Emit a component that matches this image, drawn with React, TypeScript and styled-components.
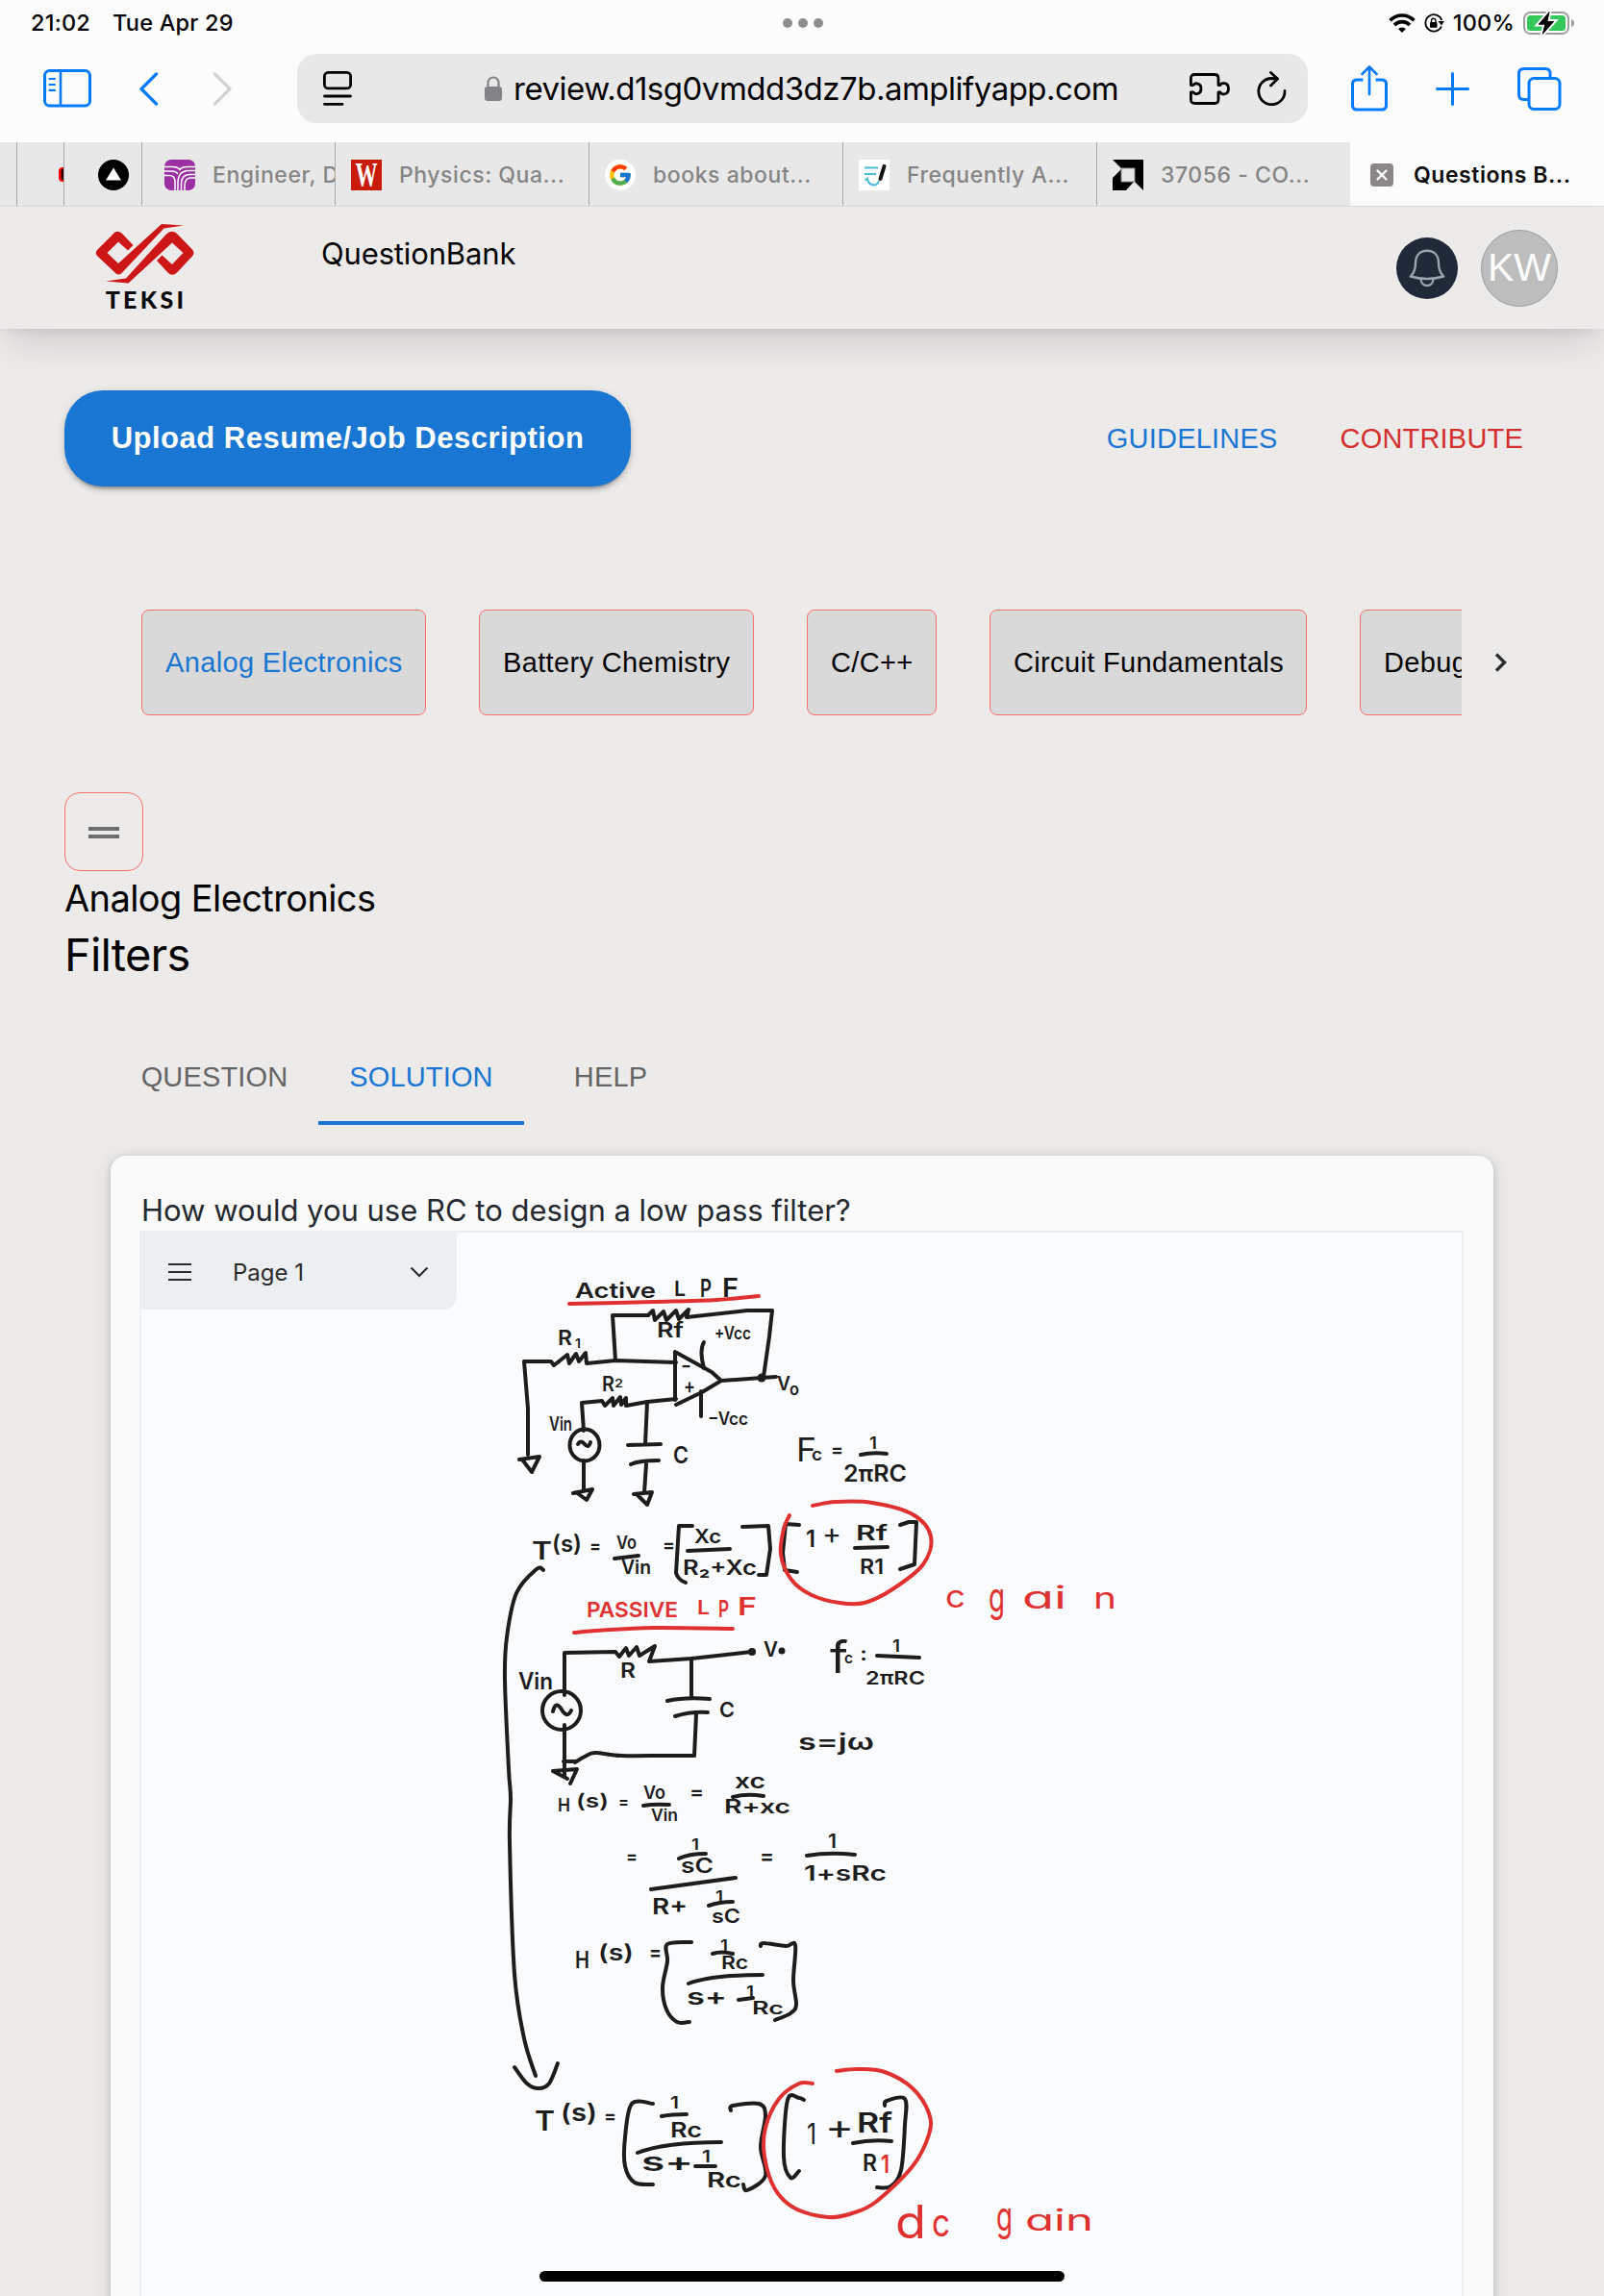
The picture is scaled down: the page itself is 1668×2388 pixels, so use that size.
import React, { useState } from "react";
import styled, { createGlobalStyle } from 'styled-components'
import { FcGoogle } from 'react-icons/fc'

const SANS = `Inter, "Liberation Sans", sans-serif`;
const HELV = `"Liberation Sans", Arial, sans-serif`;
const INK = '#1d1d1d';
const RED = '#e03131';

const topics = [
    { name: 'Analog Electronics', width: 296 },
    { name: 'Battery Chemistry', width: 286 },
    { name: 'C/C++', width: 135 },
    { name: 'Circuit Fundamentals', width: 330 },
    { name: 'Debug', width: 220 },
];

const sections = [
    { name: 'Question', width: 216 },
    { name: 'Solution', width: 214 },
    { name: 'Help', width: 180 },
];


export default function App(){

    const [topic, setTopic] = useState('Analog Electronics');
    const [section, setSection] = useState('Solution');

    return(
        <Page>
            <GlobalStyle />
            <StatusBar>
                <StatusText $gap={23}><span>21:02</span><span>Tue Apr 29</span></StatusText>
                <Dots><i /><i /><i /></Dots>
                <StatusIcons>
                    <WifiIcon />
                    <RotationLockIcon />
                    <StatusText $gap={0}>100%</StatusText>
                    <BatteryIcon />
                </StatusIcons>
            </StatusBar>

            <Toolbar>
                <ToolGroup>
                    <SidebarIcon />
                    <ChevronIcon color="#007aff" d="M17.500 2 L2 17.500 L17.500 33" />
                    <ChevronIcon color="#d3d3d4" d="M2.500 2 L18 17.500 L2.500 33" />
                </ToolGroup>
                <AddressBar>
                    <ReaderIcon />
                    <Address>
                        <LockIcon />
                        <span>review.d1sg0vmdd3dz7b.amplifyapp.com</span>
                    </Address>
                    <AddressTools>
                        <PuzzleIcon />
                        <ReloadIcon />
                    </AddressTools>
                </AddressBar>
                <ToolActions>
                    <ShareIcon />
                    <PlusIcon />
                    <TabsIcon />
                </ToolActions>
            </Toolbar>

            <TabStrip>
                <BrowserTab $width={17} $pad={0} $first />
                <BrowserTab $width={49} $pad={43}><VideoFavicon /></BrowserTab>
                <BrowserTab $width={81} $pad={35}><TriangleFavicon /></BrowserTab>
                <BrowserTab $width={201} $pad={23}><TreeFavicon /><TabTitle>Engineer, D</TabTitle></BrowserTab>
                <BrowserTab $width={264} $pad={16}><WFavicon><span>W</span></WFavicon><TabTitle>Physics: Qua...</TabTitle></BrowserTab>
                <BrowserTab $width={264} $pad={16}><RoundFavicon><FcGoogle size={26} /></RoundFavicon><TabTitle>books about...</TabTitle></BrowserTab>
                <BrowserTab $width={264} $pad={16}><NotesFavicon /><TabTitle>Frequently A...</TabTitle></BrowserTab>
                <BrowserTab $width={264} $pad={16}><ArrowFavicon /><TabTitle>37056 - CO...</TabTitle></BrowserTab>
                <BrowserTab $width={264} $pad={21} $active>
                    <CloseIcon />
                    <TabTitle $active>Questions B...</TabTitle>
                </BrowserTab>
            </TabStrip>

            <Header>
                <Brand>
                    <TeksiLogo />
                    <BrandName>TEKSI</BrandName>
                </Brand>
                <SiteTitle>QuestionBank</SiteTitle>
                <HeaderActions>
                    <BellButton><BellIcon /></BellButton>
                    <Avatar>KW</Avatar>
                </HeaderActions>
            </Header>

            <Content>
                <ActionsRow>
                    <UploadButton>Upload Resume/Job Description</UploadButton>
                    <TextLinks>
                        <TextLink $color="#1976d2">Guidelines</TextLink>
                        <TextLink $color="#d32f2f">Contribute</TextLink>
                    </TextLinks>
                </ActionsRow>

                <TopicsRow>
                    <TopicsScroller>
                        {topics.map((t) => (
                            <TopicChip
                                key={t.name}
                                $width={t.width}
                                $selected={t.name === topic}
                                onClick={() => setTopic(t.name)}
                            >
                                {t.name}
                            </TopicChip>
                        ))}
                    </TopicsScroller>
                    <svg width="14" height="20" viewBox="0 0 14 20">
                        <path d="M2 1.500 L10.500 10 L2 18.500" fill="none" stroke="#2e2e2e" strokeWidth="3.400" />
                    </svg>
                </TopicsRow>

                <MenuButton><i /><i /></MenuButton>
                <TopicTitle>{topic}</TopicTitle>
                <SubTitle>Filters</SubTitle>

                <SectionTabs>
                    {sections.map((s) => (
                        <SectionTab
                            key={s.name}
                            $width={s.width}
                            $selected={s.name === section}
                            onClick={() => setSection(s.name)}
                        >
                            {s.name}
                        </SectionTab>
                    ))}
                </SectionTabs>

                <Card>
                    <Prompt>How would you use RC to design a low pass filter?</Prompt>
                    <Board>
                        <Whiteboard />
                        <PageMenu>
                            <svg width="24" height="20" viewBox="0 0 24 20">
                                <path d="M0 2H24 M0 10H24 M0 18H24" stroke="#2b2b2b" strokeWidth="2.200" />
                            </svg>
                            <span>Page 1</span>
                            <svg width="20" height="12" viewBox="0 0 20 12">
                                <path d="M1.500 1.500 L10 10 L18.500 1.500" fill="none" stroke="#2b2b2b" strokeWidth="2.200" />
                            </svg>
                        </PageMenu>
                    </Board>
                </Card>
            </Content>
            <HomeIndicator />
        </Page>
    );
}


/* ---------- whiteboard ---------- */

type Pt = [number, number];

// soft curve through every point
function curve(pts: Pt[]) {
    let d = `M${pts[0][0]} ${pts[0][1]}`;
    for (let i = 0; i < pts.length - 1; i++) {
        const a = pts[i - 1] || pts[i];
        const b = pts[i];
        const c = pts[i + 1];
        const e = pts[i + 2] || c;
        d += ` C${b[0] + (c[0] - a[0]) / 6} ${b[1] + (c[1] - a[1]) / 6} ${c[0] - (e[0] - b[0]) / 6} ${c[1] - (e[1] - b[1]) / 6} ${c[0]} ${c[1]}`;
    }
    return d;
}

// [text, x, baseline, width, font size]
type Label = [string, number, number, number, number];

const labels: Label[] = [
    ['Active', 598, 1350, 84, 22], ['L', 701, 1348, 12, 22], ['P', 728, 1349, 12, 25], ['F', 751, 1349, 17, 27],
    ['Rf', 683, 1391, 28, 22], ['+Vcc', 743, 1393, 38, 18],
    ['R', 580, 1399, 15, 22], ['1', 598, 1402, 6, 13],
    ['R', 626, 1447, 13, 21], ['2', 639, 1443, 9, 12],
    ['−', 708, 1427, 11, 20], ['+', 711, 1449, 12, 22],
    ['−Vcc', 736, 1482, 42, 18], ['V', 808, 1446, 14, 20], ['o', 821, 1451, 10, 17],
    ['Vin', 571, 1488, 24, 20], ['C', 700, 1522, 16, 24],
    ['F', 828, 1520, 21, 34], ['c', 844, 1519, 11, 18], ['=', 864, 1515, 13, 20], ['1', 904, 1507, 8, 17], ['2πRC', 877, 1541, 66, 24],
    ['T', 553, 1622, 21, 26], ['(s)', 574, 1614, 31, 24], ['=', 613, 1615, 12, 20],
    ['Vo', 641, 1611, 21, 19], ['Vin', 646, 1637, 31, 20], ['=', 689, 1614, 13, 20],
    ['Xc', 722, 1605, 28, 20], ['R₂+Xc', 710, 1638, 77, 21],
    ['1', 838, 1609, 10, 24], ['+', 855, 1606, 20, 30], ['Rf', 890, 1602, 33, 22], ['R1', 894, 1637, 25, 22],
    ['R', 645, 1745, 16, 22], ['V', 794, 1723, 15, 22], ['Vin', 539, 1757, 36, 24], ['C', 748, 1786, 16, 22],
    ['f', 863, 1740, 19, 46], ['c', 878, 1730, 9, 16], [':', 894, 1727, 8, 20], ['1', 928, 1718, 8, 17], ['2πRC', 900, 1752, 62, 19],
    ['s=jω', 830, 1820, 79, 24],
    ['H', 580, 1884, 13, 19], ['(s)', 599, 1880, 34, 20], ['=', 643, 1880, 11, 18],
    ['Vo', 669, 1871, 23, 19], ['Vin', 677, 1894, 28, 17], ['=', 717, 1871, 15, 20],
    ['xc', 764, 1860, 32, 22], ['R+xc', 753, 1886, 69, 20],
    ['=', 651, 1938, 12, 20], ['1', 719, 1924, 8, 16], ['sC', 708, 1948, 34, 21], ['R+', 678, 1991, 37, 23],
    ['1', 744, 1978, 8, 16], ['sC', 740, 2000, 30, 20],
    ['=', 790, 1938, 15, 22], ['1', 861, 1922, 9, 20], ['1+sRc', 836, 1956, 86, 22],
    ['H', 598, 2047, 15, 24], ['(s)', 622, 2039, 37, 23], ['=', 675, 2038, 13, 22],
    ['1', 749, 2029, 8, 16], ['Rc', 750, 2048, 28, 19], ['s+', 714, 2085, 42, 24], ['1', 776, 2077, 8, 16], ['Rc', 782, 2095, 33, 18],
    ['T', 556, 2216, 21, 28], ['(s)', 583, 2206, 38, 25], ['=', 628, 2208, 13, 20],
    ['1', 697, 2193, 9, 17], ['Rc', 697, 2223, 33, 22], ['s+', 667, 2258, 54, 27], ['1', 730, 2249, 9, 17], ['Rc', 735, 2275, 36, 22],
    ['1', 839, 2230, 10, 30], ['+', 858, 2225, 30, 36], ['Rf', 891, 2218, 37, 28], ['R', 897, 2258, 15, 24],
];

const redLabels: Label[] = [
    ['c', 983, 1672, 21, 32], ['g', 1028, 1676, 17, 42], ['ai', 1063, 1673, 46, 32], ['n', 1137, 1673, 24, 30],
    ['PASSIVE', 610, 1682, 95, 22], ['L', 725, 1679, 13, 20], ['P', 747, 1682, 11, 24], ['F', 767, 1680, 20, 26],
    ['1', 916, 2260, 9, 25],
    ['d', 931, 2328, 32, 48], ['c', 969, 2326, 19, 40], ['g', 1036, 2320, 17, 42], ['ain', 1066, 2320, 71, 30],
];

// straight and zig-zag pen strokes
const strokes = [
    'M549 1513V1465L545 1416H573L576 1420L590 1409L592 1418L599 1408L602 1416L609 1407L610 1418L640 1415L703 1417',
    'M640 1415L637 1368H674L679 1363L681 1373L690 1364L693 1373L703 1363L706 1372L716 1362L714 1370L777 1363H803L800 1390L794 1432',
    'M702 1406V1456 M702 1406L740 1427L750 1436L730 1448L703 1461 M750 1436L792 1433L807 1432',
    'M732 1396Q727 1404 732 1423 M729 1447V1473',
    'M607 1488L605 1459L626 1457L629 1462L637 1454L638 1462L645 1453L646 1461L651 1454V1462L673 1458L703 1455',
    'M673 1458L671 1502 M653 1503L687 1502 M656 1523Q664 1519 685 1519 M672 1523L670 1552',
    'M659 1554L678 1552L673 1565L662 1554 M607 1519V1549 M596 1553L616 1549L610 1560L599 1552 M540 1518L561 1515L553 1531L543 1518',
    'M601 1502Q604 1497 608 1502T614 1500',
    'M895 1513Q908 1510 922 1512',
    'M639 1621L664 1618 M715 1613L759 1611 M889 1610L923 1609',
    'M720 1587H706L703 1636Q705 1643 713 1646 M772 1588L799 1587L801 1611L797 1638H789',
    'M831 1586L817 1585L814 1615L816 1633L829 1635 M936 1586L945 1583H953L951 1627L936 1632',
    'M587 1763V1719L640 1718L644 1723L651 1714L654 1722L662 1713L665 1722L681 1712L675 1728L719 1725L781 1718',
    'M719 1725V1765 M694 1769Q712 1765 738 1767 M702 1785Q718 1780 736 1781 M724 1783L722 1826',
    'M587 1794V1848 M586 1832H598 M575 1842L600 1840L593 1855 M575 1842L590 1850',
    'M575 1780Q578 1768 584 1778T594 1779',
    'M912 1722L956 1724',
    'M669 1878Q680 1876 696 1877 M762 1869Q776 1865 794 1868',
    'M706 1933Q716 1928 734 1928 M677 1965L765 1953 M737 1982Q748 1978 762 1978 M839 1930Q862 1926 889 1929',
    'M741 2032Q750 2029 762 2032 M716 2063Q740 2054 793 2054 M768 2080L783 2078',
    'M688 2201Q698 2199 714 2199 M663 2239Q692 2228 750 2228 M723 2253H744 M887 2229Q906 2225 927 2227',
];

const curves: Pt[][] = [
    [[565, 1633], [558, 1632], [537, 1657], [527, 1703], [525, 1747], [529, 1840], [531, 1870], [530, 1917], [535, 2053], [545, 2120], [557, 2159]],
    [[535, 2150], [548, 2167], [560, 2172], [571, 2167], [580, 2146]],
    [[722, 1826], [690, 1826], [646, 1826], [619, 1823], [608, 1827], [598, 1833]],
    [[719, 2020], [694, 2022], [694, 2040], [689, 2067], [693, 2090], [704, 2103], [717, 2103]],
    [[791, 2024], [794, 2021], [817, 2024], [827, 2023], [825, 2060], [828, 2085], [822, 2094], [806, 2101]],
    [[679, 2188], [657, 2188], [650, 2223], [650, 2253], [660, 2270], [679, 2272]],
    [[760, 2195], [762, 2190], [789, 2188], [796, 2200], [791, 2233], [796, 2263], [777, 2278], [773, 2272]],
    [[836, 2184], [831, 2182], [819, 2184], [815, 2243], [822, 2265], [831, 2258]],
    [[920, 2190], [922, 2185], [941, 2183], [941, 2210], [937, 2257], [926, 2274], [912, 2275]],
];

const redCurves: Pt[][] = [
    [[592, 1356], [680, 1354], [745, 1352], [789, 1348]],
    [[597, 1698], [620, 1696], [680, 1693], [762, 1694]],
    [[845, 1566], [869, 1562], [907, 1563], [949, 1575], [968, 1598], [960, 1627], [928, 1653], [899, 1667], [873, 1667], [844, 1659], [823, 1643], [812, 1617], [815, 1590], [821, 1576]],
    [[870, 2154], [892, 2152], [920, 2155], [949, 2172], [966, 2198], [966, 2220], [949, 2253], [911, 2290], [886, 2302], [861, 2306], [827, 2297], [806, 2277], [795, 2243], [796, 2213], [810, 2183], [831, 2167], [845, 2167]],
];

function Whiteboard(){
    return(
        <Drawing viewBox="147 1282 1373 1106">
            <g stroke={INK}>
                {strokes.map((d) => <path key={d} d={d} />)}
                {curves.map((c, i) => <path key={i} d={curve(c)} />)}
                <ellipse cx="608" cy="1503" rx="15.500" ry="16.500" />
                <ellipse cx="584" cy="1779" rx="20" ry="20" />
            </g>
            <g fill={INK} stroke="none">
                <circle cx="792" cy="1433" r="4.500" />
                <circle cx="782" cy="1718" r="4" />
                <circle cx="813" cy="1717" r="3.500" />
            </g>
            <g stroke={RED}>
                {redCurves.map((c, i) => <path key={i} d={curve(c)} />)}
            </g>
            {labels.map(([text, x, y, w, s], i) => (
                <InkText key={i} x={x} y={y} textLength={w} fontSize={s} fill={INK}>{text}</InkText>
            ))}
            {redLabels.map(([text, x, y, w, s], i) => (
                <InkText key={i} x={x} y={y} textLength={w} fontSize={s} fill={RED}>{text}</InkText>
            ))}
        </Drawing>
    );
}

const InkText = styled.text.attrs({ lengthAdjust: 'spacingAndGlyphs' })`
    font-family: Inter, "DejaVu Sans", sans-serif;
    font-weight: ${({ fontSize }) => (Number(fontSize) > 29 ? 400 : 600)};
    font-feature-settings: "cv11";
    stroke: none;
`;

const Drawing = styled.svg`
    display: block;
    width: 1373px;
    height: 1106px;
    fill: none;
    stroke-width: 4;
    stroke-linecap: round;
    stroke-linejoin: round;
`;


/* ---------- icons ---------- */

const WifiIcon = () => (
    <svg width="28" height="20" viewBox="0 0 28 20">
        <g fill="none" stroke="#000" strokeWidth="3.600">
            <path d="M1.500 7.300A17.500 17.500 0 0 1 26.500 7.300" />
            <path d="M6 12A11.200 11.200 0 0 1 22 12" />
        </g>
        <path d="M14 20L10 16A5.800 5.800 0 0 1 18 16Z" />
    </svg>
);

const RotationLockIcon = () => (
    <svg width="21" height="20" viewBox="0 0 21 20">
        <path d="M18 13.500A8.700 8.700 0 1 1 18.300 7" fill="none" stroke="#000" strokeWidth="1.800" />
        <path d="M14.500 8L21 8L18 12.500Z" />
        <rect x="6" y="9" width="7.500" height="5.800" rx="1" />
        <path d="M7.500 9V7.500A2.200 2.200 0 0 1 12 7.500V9" fill="none" stroke="#000" strokeWidth="1.300" />
    </svg>
);

const BatteryIcon = () => (
    <svg width="54" height="26" viewBox="0 0 54 26">
        <rect x="1" y="2" width="46" height="22" rx="6.500" fill="none" stroke="#9d9d9d" strokeWidth="2" />
        <path d="M50 9Q53 10 53 13T50 17Z" fill="#9d9d9d" />
        <rect x="4" y="5" width="40" height="16" rx="3.500" fill="#34c759" />
        <path d="M27.500 .500L15.500 14.500H22.500L19.500 25.500L32.500 11H25.500Z" fill="#000" stroke="#fdfcfd" strokeWidth="4" paintOrder="stroke" />
        <path d="M27.500 1.500L16 14.500H22.500L20 24.500L32 11H25Z" fill="#000" />
    </svg>
);

const SidebarIcon = () => (
    <svg width="50" height="40" viewBox="0 0 50 40" fill="none" stroke="#007aff">
        <rect x="1.500" y="1.500" width="47" height="36.500" rx="5" strokeWidth="3" />
        <path d="M18 2V38" strokeWidth="2.600" />
        <path d="M6.500 10H12 M6.500 16H12 M6.500 21.800H12" strokeWidth="2.200" strokeLinecap="round" />
    </svg>
);

const ChevronIcon = ({ color, d }: { color: string, d: string }) => (
    <svg width="20" height="35" viewBox="0 0 20 35">
        <path d={d} fill="none" stroke={color} strokeWidth="3.200" strokeLinecap="round" strokeLinejoin="round" />
    </svg>
);

const ReaderIcon = () => (
    <svg width="30" height="36" viewBox="0 0 30 36" fill="none" stroke="#000" strokeWidth="2.800" strokeLinecap="round">
        <rect x="1.400" y="1.400" width="27.200" height="16.500" rx="4" />
        <path d="M1.500 26H28.500 M1.500 34.400H20" />
    </svg>
);

const LockIcon = () => (
    <svg width="18" height="26" viewBox="0 0 18 26">
        <rect x="0" y="11" width="18" height="15" rx="3" fill="#838287" />
        <path d="M3.500 11V6.500A5.500 5 0 0 1 14.500 6.500V11" fill="none" stroke="#838287" strokeWidth="2.200" />
    </svg>
);

const PuzzleIcon = () => (
    <svg width="42" height="33" viewBox="0 0 42 33">
        <path
            d="M1.400 12.500V5.500Q1.400 1.500 5.500 1.500H26Q30 1.500 30 5.500V12.500H32C33 9.500 40.500 9.500 40.500 16.200S33 23 32 20H30V27.500Q30 31.500 26 31.500H5.500Q1.400 31.500 1.400 27.500V20H4C6 23 12 22 12 16.200S6 9.500 4 12.500Z"
            fill="none" stroke="#000" strokeWidth="2.800" strokeLinejoin="round"
        />
    </svg>
);

const ReloadIcon = () => (
    <svg width="31" height="36" viewBox="0 0 31 36" fill="none" stroke="#000" strokeWidth="2.800" strokeLinecap="round" strokeLinejoin="round">
        <path d="M29 20.500A13.600 13.600 0 1 1 15.400 7.500L21.500 8" />
        <path d="M14.500 1.500L21.500 8L14.500 15" />
    </svg>
);

const ShareIcon = () => (
    <svg width="38" height="48" viewBox="0 0 38 48" fill="none" stroke="#007aff" strokeWidth="3" strokeLinecap="round" strokeLinejoin="round">
        <path d="M12.500 15H6Q1.500 15 1.500 19.500V41.500Q1.500 46 6 46H32Q36.500 46 36.500 41.500V19.500Q36.500 15 32 15H25.500" strokeLinecap="butt" />
        <path d="M19 30V2 M11.500 9L19 1.500L26.500 9" strokeWidth="2.600" />
    </svg>
);

const PlusIcon = () => (
    <svg width="35" height="35" viewBox="0 0 35 35">
        <path d="M17.500 1.500V33.500 M1.500 17.500H33.500" stroke="#007aff" strokeWidth="3" strokeLinecap="round" />
    </svg>
);

const TabsIcon = () => (
    <svg width="46" height="45" viewBox="0 0 46 45" fill="none" stroke="#007aff" strokeWidth="3">
        <path d="M11 33.500H6.500Q1.500 33.500 1.500 28.500V6.500Q1.500 1.500 6.500 1.500H29Q34 1.500 34 6.500V10" />
        <rect x="12" y="11.500" width="32" height="32" rx="5" />
    </svg>
);

const VideoFavicon = () => (
    <svg width="22" height="16" viewBox="0 0 22 16">
        <rect width="22" height="15" rx="4" fill="#f00" />
        <rect x="2.500" y="1.500" width="22" height="12" rx="3" fill="#2b0505" />
    </svg>
);

const TriangleFavicon = () => (
    <svg width="32" height="32" viewBox="0 0 32 32">
        <circle cx="16" cy="16" r="16" />
        <path d="M16 8.500L24 21.500H8Z" fill="#fff" />
    </svg>
);

const TreeFavicon = () => (
    <svg width="32" height="32" viewBox="0 0 32 32">
        <rect width="32" height="32" rx="7" fill="#9b30a5" />
        <g fill="none" stroke="#fff" strokeWidth="1.500">
            <path d="M0 7.500H8Q14 7.500 16 10.500Q18 7.500 24 7.500H32" />
            <path d="M0 12H7Q12 12 14 15 M32 11.500H25Q14 12 14 24V32" />
            <path d="M0 16.500H5Q11 16.500 11 23V32 M32 15.500H26Q17.500 16 17.500 25V32" />
            <path d="M32 19H27Q21 19.500 21 27V32" />
        </g>
    </svg>
);

const NotesFavicon = () => (
    <svg width="32" height="32" viewBox="0 0 32 32">
        <rect width="32" height="32" fill="#fff" />
        <path d="M6 8.500H20 M6 15H18 M6.500 21.500L9 19.500L10 23.500 M9 20C10 27 19 29 21 22" fill="none" stroke="#4bbcd6" strokeWidth="2" />
        <path d="M26.500 7L22.500 20" stroke="#111" strokeWidth="4" strokeLinecap="round" />
    </svg>
);

const ArrowFavicon = () => (
    <svg width="32" height="32" viewBox="0 0 32 32">
        <path d="M0 0H32V32L23 23V9H9Z" />
        <path d="M0 19L9 10V23H22L14 32H0Z" />
        <path d="M9 9H23V23H9Z" fill="#e8e8e8" stroke="#8c8c8c" />
    </svg>
);

const CloseIcon = () => (
    <svg width="24" height="24" viewBox="0 0 24 24">
        <rect width="24" height="24" rx="4" fill="#8b8788" />
        <path d="M7.500 7.500L16.500 16.500M16.500 7.500L7.500 16.500" stroke="#fff" strokeWidth="2.400" strokeLinecap="round" />
    </svg>
);

const TeksiLogo = () => (
    <svg width="104" height="64" viewBox="0 0 104 64">
        <path d="M24 9Q27 9 29 12L39.500 23L34 28.500L24 19.500L12.500 31L24 42L69 1L92 2.500L71.500 5.500L28.500 51Q24.500 56 20 51L2 34Q-.500 31 2 28L18 12Q21 8 24 9Z" fill="#cc1618" />
        <path d="M11 60.500L32 57.500L73.500 12Q79.500 6 85 11L101 27.500Q104 31 101 34.500L85 51.500Q80 56 75.500 51.500L64 39L69.500 33.500L80 43L91.500 31L80 20.500L34.500 62.500Z" fill="#cc1618" />
    </svg>
);

const BellIcon = () => (
    <svg width="38" height="40" viewBox="0 0 38 40" fill="none" stroke="#9ca3af" strokeWidth="2.400" strokeLinejoin="round">
        <path d="M1.800 28.500Q7 23 7 15C7 6 12 1.800 19 1.800S31 6 31 15Q31 23 36.200 28.500Q19 33.500 1.800 28.500Z" />
        <path d="M12.500 31C13 40.500 25 40.500 25.500 31" />
    </svg>
);


/* ---------- browser chrome ---------- */

const GlobalStyle = createGlobalStyle`
    * {
        box-sizing: border-box;
    }
    body {
        margin: 0;
        background: #edebea;
    }
    svg {
        flex-shrink: 0;
    }
    button {
        border: 0;
        padding: 0;
        background: none;
    }
`;

const Page = styled.div`
    width: 1668px;
    height: 2388px;
    overflow: hidden;
    background: #edebea;
    color: #000;
    font-family: ${SANS};
`;

const StatusBar = styled.div`
    display: grid;
    grid-template-columns: 1fr auto 1fr;
    align-items: center;
    height: 48px;
    padding: 0 30px 0 32px;
    background: #fdfcfd;
`;

const StatusText = styled.div<{ $gap: number }>`
    display: flex;
    gap: ${({ $gap }) => $gap}px;
    font-size: 23.5px;
    font-weight: 500;
    line-height: 48px;
    letter-spacing: 0.2px;
    white-space: nowrap;
`;

const Dots = styled.div`
    display: flex;
    gap: 6px;
    i {
        width: 10px;
        height: 10px;
        border-radius: 50%;
        background: #8f8f8f;
    }
`;

const StatusIcons = styled.div`
    display: flex;
    align-items: center;
    justify-content: flex-end;
    gap: 9px;
`;

const Toolbar = styled.div`
    display: flex;
    align-items: center;
    height: 100px;
    padding: 0 44px 12px 45px;
    background: #fdfcfd;
`;

const ToolGroup = styled.div`
    display: flex;
    align-items: center;
    width: 264px;
    svg + svg {
        margin-left: 50px;
    }
    svg + svg + svg {
        margin-left: 56px;
    }
`;

const AddressBar = styled.div`
    display: flex;
    align-items: center;
    width: 1051px;
    height: 72px;
    padding: 0 22px 0 27px;
    border-radius: 20px;
    background: #e8e8e8;
`;

const Address = styled.div`
    display: flex;
    align-items: center;
    gap: 12px;
    margin-left: 138px;
    font-size: 33px;
    letter-spacing: -0.5px;
    white-space: nowrap;
`;

const AddressTools = styled.div`
    display: flex;
    align-items: center;
    gap: 28px;
    margin-left: auto;
`;

const ToolActions = styled.div`
    display: flex;
    align-items: center;
    gap: 50px;
    margin-left: auto;
`;

const TabStrip = styled.div`
    display: flex;
    height: 67px;
    border-bottom: 1px solid #dcdbda;
    background: #e8e8e8;
`;

const BrowserTab = styled.div<{ $width: number, $pad: number, $first?: boolean, $active?: boolean }>`
    display: flex;
    align-items: center;
    gap: 18px;
    width: ${({ $width }) => $width}px;
    padding-left: ${({ $pad }) => $pad}px;
    padding-top: 1px;
    overflow: hidden;
    border-left: ${({ $first, $active }) => ($first || $active ? '0' : '1px solid #a8a8a8')};
    background: ${({ $active }) => ($active ? '#fdfcfd' : '#e8e8e8')};
`;

const TabTitle = styled.span<{ $active?: boolean }>`
    font-size: 23px;
    font-weight: ${({ $active }) => ($active ? 600 : 500)};
    letter-spacing: 0.55px;
    margin-left: ${({ $active }) => ($active ? 3 : 0)}px;
    color: ${({ $active }) => ($active ? '#0b0b0b' : '#858585')};
    white-space: nowrap;
`;

const WFavicon = styled.div`
    display: flex;
    align-items: center;
    justify-content: center;
    width: 32px;
    height: 32px;
    background: #c91b0a;
    color: #fff;
    font-family: "Liberation Serif", serif;
    font-size: 36px;
    font-weight: 700;
    line-height: 32px;
    span {
        transform: scaleX(0.64);
    }
`;

const RoundFavicon = styled.div`
    display: flex;
    align-items: center;
    justify-content: center;
    width: 32px;
    height: 32px;
    border-radius: 50%;
    background: #fff;
`;


/* ---------- site ---------- */

const Header = styled.header`
    display: flex;
    align-items: center;
    position: relative;
    height: 127px;
    padding: 0 48px 0 99px;
    background: #edebea;
    box-shadow: 0 20px 40px -10px rgba(0, 0, 0, 0.16), 0 6px 12px -4px rgba(0, 0, 0, 0.06);
`;

const Brand = styled.div`
    display: flex;
    flex-direction: column;
    align-items: center;
    width: 104px;
`;

const BrandName = styled.div`
    margin: 3px 0;
    padding-left: 2px;
    font-family: Lato, sans-serif;
    font-size: 25px;
    font-weight: 900;
    line-height: 24px;
    letter-spacing: 3.3px;
    color: #0a0a0a;
`;

const SiteTitle = styled.div`
    margin: 0 0 31px 131px;
    font-size: 31px;
    letter-spacing: -0.15px;
`;

const HeaderActions = styled.div`
    display: flex;
    align-items: center;
    gap: 24px;
    margin-left: auto;
`;

const BellButton = styled.button`
    display: flex;
    align-items: center;
    justify-content: center;
    width: 64px;
    height: 64px;
    border-radius: 50%;
    background: #1f2937;
`;

const Avatar = styled.div`
    display: flex;
    align-items: center;
    justify-content: center;
    width: 80px;
    height: 80px;
    border: 1px solid #9b9da1;
    border-radius: 50%;
    background: #bdbdbd;
    color: #fff;
    font-family: ${HELV};
    font-size: 41px;
`;

const Content = styled.main`
    padding: 64px 67px 0;
`;

const ActionsRow = styled.div`
    display: flex;
    align-items: center;
    justify-content: space-between;
    height: 100px;
    padding-right: 17px;
`;

const UploadButton = styled.button`
    width: 589px;
    height: 100px;
    border-radius: 40px;
    background: #1976d2;
    color: #fff;
    font-family: ${HELV};
    font-size: 31px;
    font-weight: 700;
    letter-spacing: 0.5px;
    white-space: nowrap;
    box-shadow: 0 6px 2px -4px rgba(0, 0, 0, 0.2), 0 4px 4px rgba(0, 0, 0, 0.14), 0 2px 10px rgba(0, 0, 0, 0.12);
`;

const TextLinks = styled.div`
    display: flex;
    gap: 65px;
`;

const TextLink = styled.a<{ $color: string }>`
    color: ${({ $color }) => $color};
    font-family: ${HELV};
    font-size: 29px;
    letter-spacing: 0.2px;
    text-transform: uppercase;
`;

const TopicsRow = styled.div`
    display: flex;
    align-items: center;
    gap: 34px;
    margin: 128px 0 80px 80px;
`;

const TopicsScroller = styled.div`
    display: flex;
    gap: 55px;
    width: 1373px;
    overflow: hidden;
`;

const TopicChip = styled.button<{ $width: number, $selected: boolean }>`
    flex: 0 0 auto;
    width: ${({ $width }) => $width}px;
    height: 110px;
    padding-left: 24px;
    border: 1px solid #f87171;
    border-radius: 8px;
    background: #d9d9d9;
    color: ${({ $selected }) => ($selected ? '#1976d2' : '#000')};
    font-family: ${HELV};
    font-size: 29px;
    letter-spacing: 0.35px;
    text-align: left;
    white-space: nowrap;
`;

const MenuButton = styled.button`
    display: flex;
    flex-direction: column;
    align-items: center;
    justify-content: center;
    gap: 4px;
    width: 82px;
    height: 82px;
    padding-top: 2px;
    border: 1px solid #f87171;
    border-radius: 16px;
    i {
        width: 32px;
        height: 4px;
        background: #6f6e6e;
    }
`;

const TopicTitle = styled.h1`
    margin: 0;
    font-size: 38px;
    font-weight: 400;
    line-height: 56px;
    letter-spacing: -0.6px;
`;

const SubTitle = styled.h2`
    margin: 0;
    font-size: 47px;
    font-weight: 400;
    line-height: 62px;
    letter-spacing: -0.8px;
`;

const SectionTabs = styled.div`
    display: flex;
    margin: 47px 0 32px 48px;
`;

const SectionTab = styled.button<{ $width: number, $selected: boolean }>`
    width: ${({ $width }) => $width}px;
    height: 99px;
    color: ${({ $selected }) => ($selected ? '#1976d2' : '#666565')};
    box-shadow: ${({ $selected }) => ($selected ? 'inset 0 -4px #1976d2' : 'none')};
    font-family: ${HELV};
    font-size: 29px;
    letter-spacing: 0.15px;
    text-transform: uppercase;
`;

const Card = styled.section`
    width: 1438px;
    height: 1300px;
    margin-left: 48px;
    padding: 36px 30px 0;
    border-radius: 16px;
    background: #fafafa;
    box-shadow: 0 2px 6px rgba(0, 0, 0, 0.16), 0 4px 20px rgba(0, 0, 0, 0.12);
`;

const Prompt = styled.p`
    margin: 0;
    padding-left: 2px;
    font-size: 31px;
    line-height: 42px;
    color: #24292f;
    white-space: nowrap;
`;

const Board = styled.div`
    position: relative;
    width: 1377px;
    border: 2px solid #eceff3;
    background: #fafbfd;
`;

/* floats over the canvas */
const PageMenu = styled.div`
    position: absolute;
    top: -2px;
    left: -2px;
    display: flex;
    align-items: center;
    width: 330px;
    height: 82px;
    padding: 4px 29px 0 30px;
    border-radius: 0 0 14px 0;
    background: #eceff2;
    color: #2b2b2b;
    font-size: 24px;
    span {
        margin: 0 auto 0 43px;
    }
`;

const HomeIndicator = styled.div`
    position: absolute;
    top: 2362px;
    left: 561px;
    width: 546px;
    height: 11px;
    border-radius: 6px;
    background: #000;
`;
